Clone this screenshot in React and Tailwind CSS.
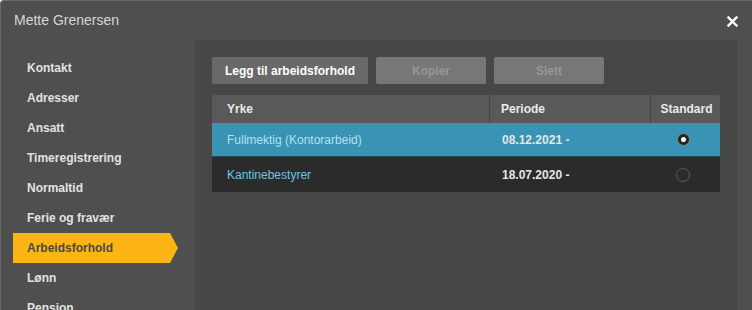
import React from "react";

const items = [
  "Kontakt",
  "Adresser",
  "Ansatt",
  "Timeregistrering",
  "Normaltid",
  "Ferie og fravær",
  "Arbeidsforhold",
  "Lønn",
  "Pension",
];

function Radio({ checked }) {
  return checked ? (
    <span className="flex h-[13px] w-[13px] items-center justify-center rounded-full border border-[#7a8a90] bg-[#262626]">
      <span className="h-[5px] w-[5px] rounded-full bg-white" />
    </span>
  ) : (
    <span className="h-[14px] w-[14px] rounded-full border border-[#5c5c5c]" />
  );
}

export default function App() {
  return (
    <div className="h-[310px] w-[752px] overflow-hidden rounded-tl-[4px] border-l border-t border-[#6b6b6b] bg-[#4f4f4f] font-['Liberation_Sans',Arial,sans-serif]">
      <div className="flex h-[39px] items-center justify-between pl-[13px] pr-[14px]">
        <span className="text-[14px] text-[#d6d6d6]">Mette Grenersen</span>
        <svg width="11" height="11" viewBox="0 0 11 11" className="mt-[1px]">
          <path d="M1.5 1.5 L9.5 9.5 M9.5 1.5 L1.5 9.5" stroke="#ffffff" strokeWidth="2.4" strokeLinecap="square" />
        </svg>
      </div>
      <div className="flex h-[271px]">
        <div className="w-[194px] pt-[13px]">
          {items.map((it) =>
            it === "Arbeidsforhold" ? (
              <div
                key={it}
                className="ml-[12px] flex h-[30px] w-[165px] items-center bg-[#fdb515] pl-[14px] text-[12px] font-bold text-[#4a4a4a]"
                style={{ clipPath: "polygon(0 0, 157px 0, 100% 50%, 157px 100%, 0 100%)" }}
              >
                {it}
              </div>
            ) : (
              <div key={it} className="flex h-[30px] items-center pl-[26px] text-[12px] font-bold text-[#e2e2e2]">
                {it}
              </div>
            )
          )}
        </div>
        <div className="w-[542px] bg-[#474747] pl-[17px] pt-[17px]">
          <div className="flex gap-[8px]">
            <div className="flex h-[27px] w-[156px] items-center justify-center rounded-[2px] bg-[#696969] text-[12px] font-bold text-white">
              Legg til arbeidsforhold
            </div>
            <div className="flex h-[27px] w-[110px] items-center justify-center rounded-[2px] bg-[#777777] text-[12px] font-bold text-[#969696]">
              Kopier
            </div>
            <div className="flex h-[27px] w-[110px] items-center justify-center rounded-[2px] bg-[#777777] text-[12px] font-bold text-[#969696]">
              Slett
            </div>
          </div>
          <div className="mt-[11px] w-[508px] text-[12px]">
            <div className="flex h-[28px] rounded-t-[3px] bg-[#595959] font-bold text-[#eaeaea]">
              <div className="flex w-[278px] items-center border-r border-[#444444] pl-[15px]">Yrke</div>
              <div className="flex w-[161px] items-center border-r border-[#444444] pl-[11px]">Periode</div>
              <div className="flex flex-1 items-center justify-center pl-[2px]">Standard</div>
            </div>
            <div className="flex h-[34px] border-b border-[#2b4a57] bg-[#3893b5]">
              <div className="flex w-[278px] items-center pl-[15px] text-[#b4e0f1]">Fullmektig (Kontorarbeid)</div>
              <div className="flex w-[161px] items-center pl-[12px] font-bold text-[#e6e6e6]">08.12.2021 -</div>
              <div className="flex flex-1 items-center justify-center pr-[5px]">
                <Radio checked />
              </div>
            </div>
            <div className="flex h-[35px] bg-[#2b2b2b]">
              <div className="flex w-[278px] items-center pl-[15px] text-[#6cc4e4]">Kantinebestyrer</div>
              <div className="flex w-[161px] items-center pl-[12px] font-bold text-[#e6e6e6]">18.07.2020 -</div>
              <div className="flex flex-1 items-center justify-center pr-[5px]">
                <Radio />
              </div>
            </div>
          </div>
        </div>
      </div>
    </div>
  );
}
